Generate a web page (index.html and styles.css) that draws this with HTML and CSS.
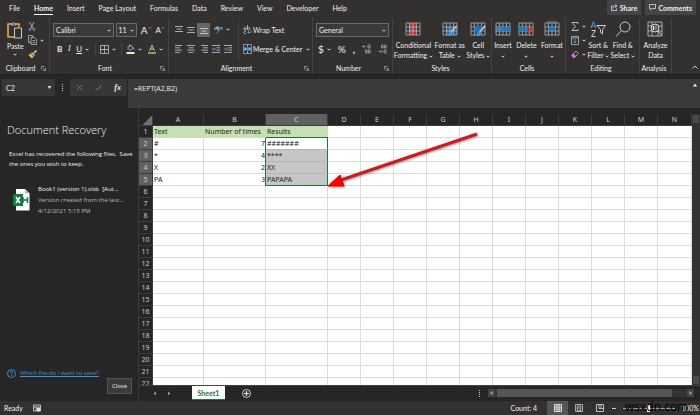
FILE: index.html
```html
<!DOCTYPE html>
<html lang="en">
<head>
    <meta charset="UTF-8">
    <meta name="viewport" content="width=device-width, initial-scale=1.0">
    <title>Book1 - Excel</title>
    <link rel="stylesheet" href="styles.css">
</head>
<body>
    <!-- Shared icon shapes -->
    <svg class="defs" aria-hidden="true">
        <symbol id="caret" viewBox="0 0 4 3"><path d="M0.5 0.7 2 2.2 3.5 0.7" fill="none" stroke="#ddd"/></symbol>
        <symbol id="launch" viewBox="0 0 6 6"><path d="M0.5 4.5V0.5H4.5M2 2 5 5M5.5 2.5V5.5H2.5" fill="none" stroke="#bbb" stroke-width="0.8"/></symbol>
        <symbol id="grid" viewBox="0 0 16 14"><path d="M1 1H15V13H1ZM1 5H15M1 9H15M4.5 1V13M8 1V13M11.5 1V13" fill="none" stroke="#b5b5b5" stroke-width="0.8"/></symbol>
    </svg>

    <header class="tabs">
        <nav class="tab-list">
            <a href="#">File</a>
            <a href="#" class="active">Home</a>
            <a href="#">Insert</a>
            <a href="#">Page Layout</a>
            <a href="#">Formulas</a>
            <a href="#">Data</a>
            <a href="#">Review</a>
            <a href="#">View</a>
            <a href="#">Developer</a>
            <a href="#">Help</a>
        </nav>
        <div class="tab-actions">
            <button class="action"><svg width="7" height="7" viewBox="0 0 7 7"><path d="M2.5 2H0.5V6.5H5.5V4.5M2 4.5C2 3 3 2 5 2M4 0.5 6 2 4 3.5" fill="none" stroke="#ddd" stroke-width="0.8"/></svg>Share</button>
            <button class="action"><svg width="7" height="7" viewBox="0 0 7 7"><path d="M0.5 0.5H6.5V4.5H3L1.5 6V4.5H0.5Z" fill="none" stroke="#ddd" stroke-width="0.8"/></svg>Comments</button>
        </div>
    </header>

    <section class="ribbon">
        <div class="group">
            <div class="group-body clipboard">
                <button class="big paste">
                    <svg width="16" height="18" viewBox="0 0 16 18"><path d="M7 16H1V3H4M9 3H12V6" fill="none" stroke="#e8ab4c" stroke-width="1.6"/><path d="M4 4V2.5H5.5Q6.5 0 7.5 2.5H9V4Z" fill="#555" stroke="#ccc" stroke-width="0.8"/><path d="M7.5 7H14.5V17H7.5Z" fill="#323130" stroke="#ccc"/></svg>
                    <span>Paste</span>
                    <svg width="4" height="3"><use href="#caret"/></svg>
                </button>
                <div class="stack">
                    <button class="tool"><svg width="8" height="9" viewBox="0 0 8 9"><path d="M1.5 0 5.5 7M6 0 2.5 7" stroke="#ccc" fill="none" stroke-width="0.8"/><circle cx="2" cy="7.5" r="1.1" fill="none" stroke="#4a9bd8"/><circle cx="6" cy="7.5" r="1.1" fill="none" stroke="#4a9bd8"/></svg></button>
                    <button class="tool"><svg width="9" height="10" viewBox="0 0 9 10"><path d="M3 7.5H0.5V0.5H4.5V2M3 2.5H6.5L8.5 4.5V9.5H3ZM4.5 5.5H7M4.5 7.5H7" fill="none" stroke="#bbb" stroke-width="0.8"/></svg><svg width="4" height="3"><use href="#caret"/></svg></button>
                    <button class="tool"><svg width="9" height="9" viewBox="0 0 9 9"><path d="M8.5 0.5 6 3" stroke="#ccc" stroke-width="1.6"/><path d="M4 2 7 5 6 6 3 3Z" fill="#ccc"/><path d="M2.5 3.5 5.5 6.5 4 8.5 0.5 5Z" fill="#e9c25c"/></svg></button>
                </div>
            </div>
            <div class="group-name"><span>Clipboard</span><svg width="5" height="5"><use href="#launch"/></svg></div>
        </div>

        <div class="group">
            <div class="group-body rows">
                <div class="line">
                    <button class="combo font-name">Calibri<svg width="4" height="3"><use href="#caret"/></svg></button>
                    <button class="combo font-size">11<svg width="4" height="3"><use href="#caret"/></svg></button>
                    <button class="tool letter">A<svg width="4" height="8" viewBox="0 0 4 8"><path d="M0.5 2.5 2 1 3.5 2.5" fill="none" stroke="#4a9bd8" stroke-width="0.8"/></svg></button>
                    <button class="tool letter small">A<svg width="4" height="8" viewBox="0 0 4 8"><path d="M0.5 1 2 2.5 3.5 1" fill="none" stroke="#4a9bd8" stroke-width="0.8"/></svg></button>
                </div>
                <div class="line font-line">
                    <button class="tool"><b>B</b></button>
                    <button class="tool"><i class="serif">I</i></button>
                    <button class="tool"><u>U</u><svg width="4" height="3"><use href="#caret"/></svg></button>
                    <button class="tool edge"><svg width="9" height="9" viewBox="0 0 9 9"><path d="M0.5 0.5H8.5V8.5H0.5ZM4.5 0.5V8.5M0.5 4.5H8.5" fill="none" stroke="#aaa"/></svg><svg width="4" height="3"><use href="#caret"/></svg></button>
                    <button class="tool edge"><svg width="9" height="10" viewBox="0 0 9 10"><path d="M1.5 4 4.5 1 7 4 4 6.5ZM3.5 0.5V3" fill="none" stroke="#ccc" stroke-width="0.8"/><path d="M7.5 3.5 8.5 6" stroke="#4a9bd8"/><path d="M0.5 8H8.5V10H0.5Z" fill="#e2efda"/></svg><svg width="4" height="3"><use href="#caret"/></svg></button>
                    <button class="tool"><svg width="8" height="10" viewBox="0 0 8 10"><path d="M1.5 7 4 1 6.5 7M2.5 5H5.5" fill="none" stroke="#ccc" stroke-width="0.9"/><path d="M0 8H8V10H0Z" fill="#70ad47"/></svg><svg width="4" height="3"><use href="#caret"/></svg></button>
                </div>
            </div>
            <div class="group-name"><span>Font</span><svg width="5" height="5"><use href="#launch"/></svg></div>
        </div>

        <div class="group">
            <div class="group-body align">
                <div class="align-grid">
                    <button class="tool"><svg width="8" height="8" viewBox="0 0 8 8"><path d="M0 0.5H8M1.5 3H6.5M0 5.5H8" stroke="#ccc" stroke-width="0.8"/></svg></button>
                    <button class="tool"><svg width="8" height="8" viewBox="0 0 8 8"><path d="M0 1.5H8M1.5 4H6.5M0 6.5H8" stroke="#ccc" stroke-width="0.8"/></svg></button>
                    <button class="tool pressed"><svg width="8" height="8" viewBox="0 0 8 8"><path d="M0 2.5H8M1.5 5H6.5M0 7.5H8" stroke="#ddd" stroke-width="0.8"/></svg></button>
                    <button class="tool wide"><svg width="9" height="9" viewBox="0 0 9 9"><path d="M1 5Q0 2 2.5 3L5 6M3 1V4Q5 5 5 3T3 3" fill="none" stroke="#ccc" stroke-width="0.8"/><path d="M2 8.5 8 2.5M8 5V2.5H5.5" fill="none" stroke="#4a9bd8"/></svg><svg width="4" height="3"><use href="#caret"/></svg></button>
                    <button class="tool"><svg width="8" height="8" viewBox="0 0 8 8"><path d="M0 0.5H7M0 2.8H5M0 5.1H7M0 7.4H5" stroke="#ccc" stroke-width="0.8"/></svg></button>
                    <button class="tool"><svg width="8" height="8" viewBox="0 0 8 8"><path d="M0 0.5H8M1.5 2.8H6.5M0 5.1H8M1.5 7.4H6.5" stroke="#ccc" stroke-width="0.8"/></svg></button>
                    <button class="tool"><svg width="8" height="8" viewBox="0 0 8 8"><path d="M1 0.5H8M3 2.8H8M1 5.1H8M3 7.4H8" stroke="#ccc" stroke-width="0.8"/></svg></button>
                    <button class="tool"><svg width="8" height="8" viewBox="0 0 8 8"><path d="M0 0.5H8M4.5 2.8H8M4.5 5.1H8M0 7.4H8" stroke="#ccc" stroke-width="0.8"/><path d="M4 4H0.5M2 2.5 0.5 4 2 5.5" fill="none" stroke="#4a9bd8" stroke-width="0.9"/></svg></button>
                    <button class="tool"><svg width="8" height="8" viewBox="0 0 8 8"><path d="M0 0.5H8M4.5 2.8H8M4.5 5.1H8M0 7.4H8" stroke="#ccc" stroke-width="0.8"/><path d="M0 4H3.5M2 2.5 3.5 4 2 5.5" fill="none" stroke="#4a9bd8" stroke-width="0.9"/></svg></button>
                </div>
                <div class="align-text">
                    <button class="tool"><svg width="9" height="10" viewBox="0 0 9 10"><path d="M3 2.5V4.5M3 3.5A1.2 1.2 0 1 0 3 4M4.5 0V4.5M4.5 3.5A1.2 1.2 0 1 1 4.5 4M3 6.5A1.3 1.3 0 1 0 3 8.5" fill="none" stroke="#ccc" stroke-width="0.8"/><path d="M8 5V7.5H4.5M6 6 4.5 7.5 6 9" fill="none" stroke="#4a9bd8" stroke-width="0.9"/></svg>Wrap Text</button>
                    <button class="tool"><svg width="9" height="10" viewBox="0 0 9 10"><path d="M0.5 0.5H8.5V9.5H0.5Z" fill="#323130" stroke="#aaa" stroke-width="0.8"/><path d="M1 3H8V7H1Z" fill="#1f6fb5"/><path d="M4.5 0.5V3M4.5 7V9.5M1.5 5H7.5M3 4 1.5 5 3 6M6 4 7.5 5 6 6" fill="none" stroke="#ccc" stroke-width="0.7"/></svg>Merge &amp; Center <svg class="far" width="4" height="3"><use href="#caret"/></svg></button>
                </div>
            </div>
            <div class="group-name"><span>Alignment</span><svg width="5" height="5"><use href="#launch"/></svg></div>
        </div>

        <div class="group">
            <div class="group-body rows">
                <div class="line">
                    <button class="combo format">General<svg width="4" height="3"><use href="#caret"/></svg></button>
                </div>
                <div class="line number-line">
                    <button class="tool sign">$<svg width="4" height="3"><use href="#caret"/></svg></button>
                    <button class="tool sign">%</button>
                    <button class="tool sign"><b>,</b></button>
                    <button class="tool"><svg width="9" height="10" viewBox="0 0 9 10"><path d="M4 2.5H0.5M2 1 0.5 2.5 2 4" fill="none" stroke="#4a9bd8" stroke-width="0.9"/><path d="M6 1H8V4H6ZM3.5 6H5.2V9H3.5ZM6.5 6H8.2V9H6.5Z" fill="none" stroke="#bbb" stroke-width="0.7"/></svg></button>
                    <button class="tool"><svg width="9" height="10" viewBox="0 0 9 10"><path d="M0.5 7.5H4M2.5 6 4 7.5 2.5 9" fill="none" stroke="#4a9bd8" stroke-width="0.9"/><path d="M3.5 1H5.2V4H3.5ZM6.5 1H8.2V4H6.5ZM6 6H8V9H6Z" fill="none" stroke="#bbb" stroke-width="0.7"/></svg></button>
                </div>
            </div>
            <div class="group-name"><span>Number</span><svg width="5" height="5"><use href="#launch"/></svg></div>
        </div>

        <div class="group">
            <div class="group-body bigs">
                <button class="big">
                    <svg width="16" height="16" viewBox="0 0 16 14"><path d="M4.5 1H11V5H4.5ZM4.5 9H11V13H4.5Z" fill="#d8262c"/><path d="M4.5 5H8V9H4.5Z" fill="#1f6fc0"/><path d="M8 5H11V9H8Z" fill="#d8262c"/><use href="#grid"/></svg>
                    <span>Conditional<br>Formatting <svg width="4" height="3"><use href="#caret"/></svg></span>
                </button>
                <button class="big">
                    <svg width="16" height="16" viewBox="0 0 16 14"><path d="M4.5 5H15V13H4.5Z" fill="#1466ab"/><use href="#grid"/><path d="M14.5 4 9 10" stroke="#ccc" stroke-width="1.6"/><path d="M9.5 9 7 11Q7 13 5 14Q9 14.5 10.5 11Z" fill="#4a9bd8"/></svg>
                    <span>Format as<br>Table <svg width="4" height="3"><use href="#caret"/></svg></span>
                </button>
                <button class="big">
                    <svg width="16" height="16" viewBox="0 0 16 14"><use href="#grid"/><path d="M4.5 4H12V11H4.5Z" fill="#1f6fc0"/><path d="M15 4 9.5 10" stroke="#ccc" stroke-width="1.6"/><path d="M10 9 7.5 11Q7.5 13 5.5 14Q9.5 14.5 11 11Z" fill="#4a9bd8"/></svg>
                    <span>Cell<br>Styles <svg width="4" height="3"><use href="#caret"/></svg></span>
                </button>
            </div>
            <div class="group-name"><span>Styles</span></div>
        </div>

        <div class="group">
            <div class="group-body bigs">
                <button class="big">
                    <svg width="16" height="16" viewBox="0 0 16 14"><use href="#grid"/><path d="M3 5H16V9H3Z" fill="#1f78c8"/><path d="M7 7H0.5M3 4.5 0.5 7 3 9.5" fill="none" stroke="#4a9bd8"/></svg>
                    <span>Insert<br><svg width="4" height="3"><use href="#caret"/></svg></span>
                </button>
                <button class="big">
                    <svg width="16" height="16" viewBox="0 0 16 14"><use href="#grid"/><path d="M0.5 5H10V9H0.5Z" fill="#1f78c8"/><path d="M10 5 15.5 10.5M15.5 5 10 10.5" stroke="#e0403c" stroke-width="1.3"/></svg>
                    <span>Delete<br><svg width="4" height="3"><use href="#caret"/></svg></span>
                </button>
                <button class="big">
                    <svg width="16" height="16" viewBox="0 0 16 14"><use href="#grid"/><path d="M4.5 5H11.5V9H4.5Z" fill="#1f78c8"/><path d="M3 0H13" stroke="#4a9bd8"/></svg>
                    <span>Format<br><svg width="4" height="3"><use href="#caret"/></svg></span>
                </button>
            </div>
            <div class="group-name"><span>Cells</span></div>
        </div>

        <div class="group">
            <div class="group-body editing">
                <div class="stack">
                    <button class="tool"><svg width="8" height="9" viewBox="0 0 8 9"><path d="M7 2V0.5H1L4.5 4.5 1 8.5H7V7" fill="none" stroke="#ccc" stroke-width="0.9"/></svg><svg width="4" height="3"><use href="#caret"/></svg></button>
                    <button class="tool"><svg width="8" height="9" viewBox="0 0 8 9"><path d="M0.5 0.5H7.5V8.5H0.5ZM0.5 2H7.5" fill="none" stroke="#bbb" stroke-width="0.8"/><path d="M4 3V7M2.5 5.5 4 7 5.5 5.5" fill="none" stroke="#4a9bd8"/></svg><svg width="4" height="3"><use href="#caret"/></svg></button>
                    <button class="tool"><svg width="8" height="9" viewBox="0 0 8 9"><path d="M0.5 5.5 5 1 7.5 3.5 3 8Z" fill="none" stroke="#c678d8"/><path d="M0.5 5.5 2.5 3.5 5 6 3 8Z" fill="#c678d8"/></svg><svg width="4" height="3"><use href="#caret"/></svg></button>
                </div>
                <button class="big">
                    <svg width="16" height="16" viewBox="0 0 16 16"><path d="M1 7 3.5 0.5 6 7M2 5H5" fill="none" stroke="#4a9bd8"/><path d="M1.5 9.5H5.5L1.5 15.5H5.5" fill="none" stroke="#ccc"/><path d="M7 4.5H15.5L12.5 8.5V13L10.5 11.5V8.5Z" fill="none" stroke="#ccc"/></svg>
                    <span>Sort &amp;<br>Filter <svg width="4" height="3"><use href="#caret"/></svg></span>
                </button>
                <button class="big">
                    <svg width="16" height="16" viewBox="0 0 16 16"><circle cx="10" cy="6" r="5" fill="none" stroke="#ccc"/><path d="M6.5 9.5 1 15.5" stroke="#ccc"/></svg>
                    <span>Find &amp;<br>Select <svg width="4" height="3"><use href="#caret"/></svg></span>
                </button>
            </div>
            <div class="group-name"><span>Editing</span></div>
        </div>

        <div class="group">
            <div class="group-body bigs">
                <button class="big">
                    <svg width="16" height="16" viewBox="0 0 16 16"><path d="M1 1H15V15H1ZM1 5H15M1 10H15M5 1V15M11 10V15" fill="none" stroke="#bbb" stroke-width="0.9"/><circle cx="8" cy="7" r="4" fill="#444" stroke="#ddd"/><path d="M6.5 5V9" stroke="#eee" stroke-width="1.5"/><path d="M9 4.5V9" stroke="#4a9bd8" stroke-width="1.5"/><path d="M11 10 14.5 14" stroke="#ddd"/></svg>
                    <span>Analyze<br>Data</span>
                </button>
            </div>
            <div class="group-name"><span>Analysis</span></div>
        </div>

        <div class="ribbon-end">
            <button class="tool" aria-label="Collapse ribbon"><svg width="6" height="4" viewBox="0 0 6 4"><path d="M0.5 3.5 3 1 5.5 3.5" fill="none" stroke="#ccc"/></svg></button>
        </div>
    </section>

    <section class="formula-bar">
        <button class="name-box">C2<svg width="5" height="3" viewBox="0 0 5 3"><path d="M0.5 0H4.5L2.5 3Z" fill="#ddd"/></svg></button>
        <span class="dots"></span>
        <div class="formula-tools">
            <svg width="7" height="7" viewBox="0 0 7 7"><path d="M1 1 6 6M6 1 1 6" stroke="#777"/></svg>
            <svg width="7" height="7" viewBox="0 0 7 7"><path d="M0.5 4 2.5 6 6.5 1" fill="none" stroke="#777"/></svg>
            <i class="fx">fx</i>
        </div>
        <input class="formula" type="text" value="=REPT(A2,B2)" aria-label="Formula">
        <svg class="formula-up" width="4" height="4" viewBox="0 0 4 4"><path d="M0 3.5 2 0.5 4 3.5Z" fill="#eee"/></svg>
    </section>

    <main class="workspace">
        <aside class="recovery">
            <h1>Document Recovery</h1>
            <p>Excel has recovered the following files.&nbsp; Save<br>the ones you wish to keep.</p>
            <div class="file">
                <svg width="17" height="22" viewBox="0 0 17 22"><path d="M3 0H12L16.5 4.5V21.5H3Z" fill="#fff"/><path d="M12 0V4.5H16.5Z" fill="#bbb"/><path d="M10 8V14M14.5 8V14M10 11H14.5" stroke="#217346" stroke-width="1.5"/><path d="M0 5H10V17H0Z" fill="#107c41"/><path d="M3 8 7 14M7 8 3 14" stroke="#fff" stroke-width="1.5"/></svg>
                <div class="file-text">
                    <strong>Book1 (version 1).xlsb&nbsp; [Aut...</strong>
                    <span>Version created from the last...</span>
                    <span>4/12/2021 5:15 PM</span>
                </div>
            </div>
            <div class="help">
                <svg width="9" height="9" viewBox="0 0 9 9"><circle cx="4.5" cy="4.5" r="4" fill="none" stroke="#3a96d0" stroke-width="0.9"/><path d="M3.2 3.5Q3.3 2.3 4.5 2.3T5.8 3.5Q5.8 4.2 4.5 4.8V5.5M4.5 6.2V7" fill="none" stroke="#3a96d0" stroke-width="0.9"/></svg>
                <a href="#">Which file do I want to save?</a>
            </div>
            <button class="close">Close</button>
        </aside>

        <section class="book">
            <div class="sheet">
                <table class="cells" id="cells">
                    <colgroup>
                        <col class="c-num"><col class="c-a"><col class="c-b"><col class="c-b">
                        <col class="c-d"><col class="c-d"><col class="c-d"><col class="c-d"><col class="c-d">
                        <col class="c-d"><col class="c-d"><col class="c-d"><col class="c-d"><col class="c-d"><col>
                    </colgroup>
                    <thead></thead>
                    <tbody></tbody>
                </table>
                <svg class="arrow" width="152" height="58" viewBox="0 0 152 58">
                    <path d="M149 2 13 48" stroke="#cf1a1c" stroke-width="3"/>
                    <path d="M0 54 12 43 16 54Z" fill="#f40000" stroke="#f40000"/>
                </svg>
            </div>
            <div class="v-scroll"><span class="up"></span><span class="down"></span></div>
            <div class="sheet-bar">
                <button class="tool" aria-label="Previous sheet"><svg width="4" height="5" viewBox="0 0 4 5"><path d="M3 0.5V4.5L0.5 2.5Z" fill="#999"/></svg></button>
                <button class="tool" aria-label="Next sheet"><svg width="4" height="5" viewBox="0 0 4 5"><path d="M1 0.5V4.5L3.5 2.5Z" fill="#999"/></svg></button>
                <button class="sheet-tab">Sheet1</button>
                <button class="tool" aria-label="New sheet"><svg width="9" height="9" viewBox="0 0 9 9"><circle cx="4.5" cy="4.5" r="4" fill="none" stroke="#ddd" stroke-width="0.9"/><path d="M4.5 2V7M2 4.5H7" stroke="#eee" stroke-width="1.2"/></svg></button>
                <span class="dots"></span>
                <div class="h-scroll">
                    <svg class="end" width="7" height="8" viewBox="0 0 7 8"><path d="M4.5 2V6L2 4Z" fill="#aaa"/></svg>
                    <span class="thumb"></span>
                    <svg class="end" width="7" height="8" viewBox="0 0 7 8"><path d="M2.5 2V6L5 4Z" fill="#aaa"/></svg>
                </div>
            </div>
        </section>
    </main>

    <footer class="status">
        <span>Ready</span>
        <svg class="macro" width="8" height="8" viewBox="0 0 8 8"><path d="M0.5 1H7.5V7H0.5ZM0.5 3H7.5M3 3V7" fill="none" stroke="#ccc" stroke-width="0.9"/><circle cx="5.5" cy="5.5" r="2" fill="#ddd"/></svg>
        <span class="count">Count: 4</span>
        <button class="view on" aria-label="Normal"><svg width="8" height="8" viewBox="0 0 8 8"><path d="M0.5 0.5H7.5V7.5H0.5ZM0.5 3H7.5M0.5 5.2H7.5M3 0.5V7.5M5.2 0.5V7.5" fill="none" stroke="#eee" stroke-width="0.9"/></svg></button>
        <button class="view" aria-label="Page layout"><svg width="8" height="8" viewBox="0 0 8 8"><path d="M0.5 0.5H7.5V7.5H0.5ZM2.2 2H5.8V6.5H2.2ZM2.5 4H5.5" fill="none" stroke="#ccc" stroke-width="0.8"/></svg></button>
        <button class="view" aria-label="Page break"><svg width="8" height="8" viewBox="0 0 8 8"><path d="M0.5 0.5H7.5V7.5H0.5ZM3 0.5V4.5H7.5M5 0.5V4" fill="none" stroke="#ccc" stroke-width="0.9"/></svg></button>
        <div class="zoom">
            <span class="minus"></span>
            <input type="range" min="0" max="100" value="50" aria-label="Zoom">
            <span class="percent">100%</span>
            <span class="watermark">wsxdn.com</span>
        </div>
    </footer>

    <script>
        const letters = 'ABCDEFGHIJKLMN'.split('');
        const data = [
            ['Text', 'Number of times', 'Results'],
            ['#', 7, '#######'],
            ['*', 4, '****'],
            ['X', 2, 'XX'],
            ['PA', 3, 'PAPAPA']
        ];
        const table = document.getElementById('cells');

        const head = table.tHead.insertRow();
        head.innerHTML = '<th class="corner"></th>' + letters.map(l =>
            `<th class="${l === 'C' ? 'picked' : ''}">${l}</th>`).join('');

        for (let r = 0; r < 22; r++) {
            const row = table.tBodies[0].insertRow();
            const picked = r > 0 && r < 5;
            row.innerHTML = `<th class="${picked ? 'picked' : ''}">${r + 1}</th>`;
            letters.forEach((l, c) => {
                const cell = row.insertCell();
                const value = (data[r] || [])[c];
                cell.textContent = value === undefined ? '' : value;
                if (typeof value === 'number') cell.classList.add('number');
                if (r === 0 && c < 3) cell.classList.add('title');
                if (picked && c === 2) cell.classList.add('range');
                if (r === 1 && c === 2) cell.classList.add('first');
                if (r === 4 && c === 2) cell.classList.add('last');
            });
        }
    </script>
</body>
</html>
```
FILE: styles.css
```css
* {
    margin: 0;
    padding: 0;
    box-sizing: border-box;
}

body {
    display: flex;
    flex-direction: column;
    height: 100vh;
    overflow: hidden;
    background: #262626;
    color: #f0f0f0;
    font: 7px/10px Lato, sans-serif;
}

button,
input {
    font: inherit;
    color: inherit;
    background: none;
    border: none;
}

svg {
    flex: none;
}

a {
    color: inherit;
    text-decoration: none;
}

.defs {
    position: absolute;
    width: 0;
    height: 0;
}

/* Tabs */
.tabs {
    display: flex;
    justify-content: space-between;
    height: 16px;
    padding: 0 4px 0 9px;
    background: #323130;
}

.tab-list {
    display: flex;
    gap: 14px;
    padding-top: 3px;
}

.tab-list a {
    height: 12px;
}

.tab-list .active {
    font-weight: 700;
    border-bottom: 1px solid #fff;
}

.tab-actions {
    display: flex;
    gap: 4px;
}

.action {
    display: flex;
    align-items: center;
    gap: 2px;
    height: 15px;
    padding: 0 4px;
    background: #444;
    font-weight: 700;
}

/* Ribbon */
.ribbon {
    display: grid;
    grid-template-columns: 50px 119px 144px 80px 99px 74px 74px 32px 1fr;
    height: 59px;
    padding: 2px 0 1px;
    background: #323130;
    border-bottom: 1px solid #1d1d1d;
}

.group {
    display: flex;
    flex-direction: column;
    justify-content: space-between;
    border-right: 1px solid #454443;
}

.group-body {
    display: flex;
    height: 44px;
}

.group-name {
    display: flex;
    align-items: center;
    height: 10px;
    padding-right: 3px;
}

.group-name span {
    flex: 1;
    text-align: center;
}

.tool {
    display: flex;
    align-items: center;
    gap: 3px;
    height: 12px;
}

.big {
    display: flex;
    flex-direction: column;
    align-items: center;
    gap: 3px;
    padding-top: 3px;
    line-height: 10px;
}

.big span {
    white-space: nowrap;
}

.clipboard {
    gap: 4px;
    padding-left: 7px;
}

.paste {
    gap: 2px;
}

.stack {
    display: flex;
    flex-direction: column;
    gap: 2px;
    padding-top: 2px;
}

.rows {
    flex-direction: column;
    gap: 5px;
    padding: 5px 3px 0;
}

.line {
    display: flex;
    align-items: center;
    gap: 2px;
    height: 14px;
}

.combo {
    display: flex;
    align-items: center;
    justify-content: space-between;
    height: 14px;
    padding: 0 2px;
    background: #3b3a39;
    border: 1px solid #6a6a6a;
}

.font-name {
    width: 63px;
}

.font-size {
    width: 22px;
}

.format {
    flex: 1;
}

.letter {
    gap: 0;
    margin-left: 2px;
    font-size: 10px;
}

.small {
    font-size: 8px;
}

.font-line {
    justify-content: space-between;
    padding: 0 2px 0 4px;
    font-size: 8px;
}

.serif {
    font-family: "Liberation Serif", serif;
}

.edge {
    padding-left: 4px;
    border-left: 1px solid #454443;
}

.align {
    justify-content: space-between;
    padding: 4px 2px 0 3px;
}

.align-grid {
    display: grid;
    grid-template-columns: 13px 12px 13px 12px 12px;
    grid-auto-rows: 15px;
    row-gap: 4px;
    align-items: center;
}

.align-grid .tool {
    justify-content: center;
}

.align-grid .wide {
    grid-column: span 2;
}

.align-grid .pressed {
    height: 14px;
    background: #666;
}

.align-text {
    display: flex;
    flex-direction: column;
    gap: 7px;
    width: 72px;
    padding: 2px 0 0 4px;
    border-left: 1px solid #454443;
    white-space: nowrap;
}

.align-text .tool {
    gap: 1px;
}

.far {
    margin-left: 3px;
}

.sign {
    font-size: 10px;
}

.number-line {
    justify-content: space-between;
    padding: 0 2px;
}

.bigs {
    justify-content: space-around;
}

.editing {
    justify-content: space-between;
    padding: 0 4px 0 5px;
}

.ribbon-end {
    display: flex;
    align-items: flex-end;
    justify-content: flex-end;
    padding-right: 2px;
}

/* Formula bar */
.formula-bar {
    display: flex;
    height: 33px;
    padding-top: 4px;
    background: #262626;
}

.name-box {
    display: flex;
    align-items: center;
    justify-content: space-between;
    width: 53px;
    height: 17px;
    margin-left: 2px;
    padding: 0 3px 0 4px;
    background: #363636;
}

.dots {
    width: 1px;
    height: 7px;
    margin: 5px 7px;
    border-left: 1px dotted #ccc;
}

.formula-tools {
    display: flex;
    align-items: center;
    justify-content: space-around;
    width: 57px;
    height: 17px;
    background: #363636;
}

.fx {
    font: italic 700 8px/10px "Liberation Serif", serif;
}

.formula {
    flex: 1;
    height: 29px;
    margin-left: 1px;
    padding: 0 6px 11px;
    background: #3a3a3a;
    font-family: "Open Sans", sans-serif;
}

.formula-up {
    width: 10px;
    height: 29px;
    padding: 4px 3px 21px;
    background: #3a3a3a;
}

/* Workspace */
.workspace {
    display: flex;
    flex: 1;
    min-height: 0;
}

.recovery {
    display: flex;
    flex-direction: column;
    width: 139px;
    padding: 14px 6px 7px 7px;
    border-right: 1px solid #3a3a3a;
    font: 6px/10px "Open Sans", sans-serif;
    white-space: nowrap;
}

.recovery h1 {
    font: 300 12px/16px "Open Sans", sans-serif;
    font-size: 11px;
}

.recovery p {
    margin-top: 11px;
    padding-left: 2px;
}

.file {
    display: flex;
    gap: 8px;
    margin-top: 15px;
    padding-left: 6px;
}

.file svg {
    margin-top: 5px;
}

.file-text {
    display: flex;
    flex-direction: column;
    gap: 1px;
    color: #bbb;
}

.file-text strong {
    color: #f0f0f0;
    font-weight: 400;
}

.help {
    display: flex;
    align-items: center;
    gap: 4px;
    margin-top: auto;
}

.help a {
    color: #3a96d0;
    text-decoration: underline;
}

.close {
    align-self: flex-end;
    width: 25px;
    height: 16px;
    background: #3a3a3a;
    border: 1px solid #555;
}

.book {
    display: grid;
    flex: 1;
    grid-template: 1fr 16px / 1fr 8px;
    min-width: 0;
}

.sheet {
    position: relative;
    padding-top: 6px;
    overflow: hidden;
}

.cells {
    width: 100%;
    table-layout: fixed;
    border-collapse: separate;
    border-spacing: 0;
    font: 7px/11px "Noto Sans", sans-serif;
}

.cells tr {
    height: 12px;
}

.c-num {
    width: 14px;
}

.c-a {
    width: 51px;
}

.c-b {
    width: 62px;
}

.c-d {
    width: 33px;
}

.cells th {
    background: #262626;
    border-right: 1px solid #3c3c3c;
    border-bottom: 1px solid #3c3c3c;
    color: #ccc;
    font-weight: 400;
}

.cells .picked {
    background: #606060;
}

.cells .corner {
    background: linear-gradient(135deg, #262626 60%, #707070 60%);
}

.cells td {
    padding-left: 1px;
    background: #fff;
    border-right: 1px solid #dcdcdc;
    border-bottom: 1px solid #dcdcdc;
    color: #222;
    white-space: nowrap;
}

.cells .number {
    text-align: right;
}

.cells .title {
    background: #c6e0b4;
    border-color: #c6e0b4;
}

.cells .range {
    background: #c6c6c6;
    border-right-color: #217346;
    border-bottom-color: #b4b4b4;
    box-shadow: -1px 0 #217346;
}

.cells .first {
    background: #fff;
    box-shadow: -1px 0 #217346, 0 -1px #217346;
}

.cells .last {
    border-bottom-color: #217346;
}

.arrow {
    position: absolute;
    top: 24px;
    left: 189px;
    filter: drop-shadow(1px 1px 1px #0006);
}

.v-scroll {
    display: flex;
    flex-direction: column;
    justify-content: space-between;
    margin-top: 6px;
    padding: 1px;
    background: #333;
}

.up,
.down {
    height: 8px;
    background: #4a4a4a;
}

.sheet-bar {
    display: flex;
    grid-column: span 2;
    align-items: center;
    padding: 0 6px 1px 14px;
    background: #262626;
    border-top: 1px solid #444;
}

.sheet-bar .tool + .tool {
    margin-left: 10px;
}

.sheet-tab {
    width: 33px;
    height: 14px;
    margin: 0 17px 0 21px;
    background: #fff;
    border-bottom: 1px solid #217346;
    color: #217346;
    font-weight: 700;
}

.sheet-bar .dots {
    margin: 0 8px 0 auto;
}

.h-scroll {
    display: flex;
    align-items: center;
    width: 206px;
    height: 8px;
    background: #333;
}

.end {
    background: #444;
}

.thumb {
    flex: 1;
    height: 8px;
    margin: 0 15px 0 2px;
    background: #555;
}

/* Status bar */
.status {
    display: flex;
    align-items: center;
    height: 14px;
    padding-left: 4px;
    background: #323130;
}

.macro {
    margin-left: 10px;
}

.count {
    margin: 0 10px 0 auto;
}

.view {
    display: flex;
    align-items: center;
    justify-content: center;
    width: 21px;
    height: 14px;
}

.on {
    background: #555;
}

.zoom {
    position: relative;
    display: flex;
    align-items: center;
    justify-content: space-between;
    width: 90px;
    padding: 0 1px 0 2px;
}

.minus {
    width: 4px;
    height: 1px;
    background: #ccc;
}

.zoom input {
    width: 52px;
    height: 8px;
    appearance: none;
    background: linear-gradient(#999, #999) center / 100% 1px no-repeat;
}

.zoom input::-webkit-slider-thumb {
    appearance: none;
    width: 3px;
    height: 7px;
    background: #fff;
}

.watermark {
    position: absolute;
    top: -2px;
    left: 15px;
    color: #000;
    font: 12px/12px "Open Sans", sans-serif;
}
```
